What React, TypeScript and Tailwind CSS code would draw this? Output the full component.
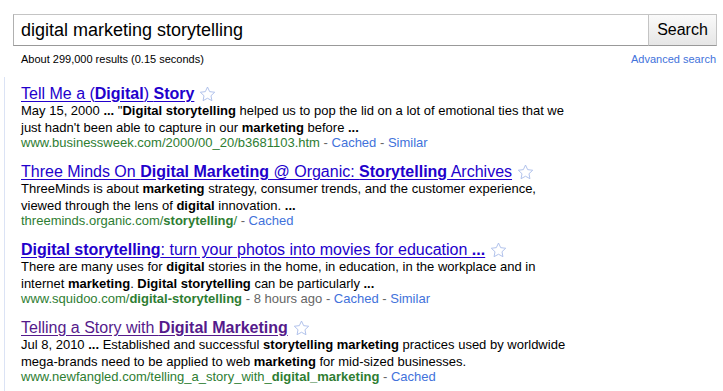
import React from 'react';

interface Result {
  title: React.ReactNode;
  visited?: boolean;
  lines: React.ReactNode[];
  url: React.ReactNode;
  extra?: string;
  similar?: boolean;
}

const results: Result[] = [
  {
    title: (
      <>
        Tell Me a (<b>Digital</b>) <b>Story</b>
      </>
    ),
    lines: [
      <>
        May 15, 2000 <b>...</b> &quot;<b>Digital storytelling</b> helped us to pop the lid on a lot of emotional ties that we
      </>,
      <>
        just hadn&apos;t been able to capture in our <b>marketing</b> before <b>...</b>
      </>,
    ],
    url: <>www.businessweek.com/2000/00_20/b3681103.htm</>,
    similar: true,
  },
  {
    title: (
      <>
        Three Minds On <b>Digital Marketing</b> @ Organic: <b>Storytelling</b> Archives
      </>
    ),
    lines: [
      <>
        ThreeMinds is about <b>marketing</b> strategy, consumer trends, and the customer experience,
      </>,
      <>
        viewed through the lens of <b>digital</b> innovation. <b>...</b>
      </>,
    ],
    url: (
      <>
        threeminds.organic.com/<b>storytelling</b>/
      </>
    ),
  },
  {
    title: (
      <>
        <b>Digital storytelling</b>: turn your photos into movies for education <b>...</b>
      </>
    ),
    lines: [
      <>
        There are many uses for <b>digital</b> stories in the home, in education, in the workplace and in
      </>,
      <>
        internet <b>marketing</b>. <b>Digital storytelling</b> can be particularly <b>...</b>
      </>,
    ],
    url: (
      <>
        www.squidoo.com/<b>digital-storytelling</b>
      </>
    ),
    extra: '8 hours ago',
    similar: true,
  },
  {
    title: (
      <>
        Telling a Story with <b>Digital Marketing</b>
      </>
    ),
    visited: true,
    lines: [
      <>
        Jul 8, 2010 <b>...</b> Established and successful <b>storytelling marketing</b> practices used by worldwide
      </>,
      <>
        mega-brands need to be applied to web <b>marketing</b> for mid-sized businesses.
      </>,
    ],
    url: (
      <>
        www.newfangled.com/telling_a_story_with_<b>digital_marketing</b>
      </>
    ),
  },
];

function Star() {
  return (
    <svg width="17" height="16" viewBox="0 0 24 23" className="ml-[5px] shrink-0">
      <path
        d="M12 1.5l3.1 6.6 7.2.9-5.3 5 1.4 7.1L12 17.6l-6.4 3.5 1.4-7.1-5.3-5 7.2-.9z"
        fill="none"
        stroke="#a9bbe9"
        strokeWidth="1.3"
        strokeLinejoin="round"
      />
    </svg>
  );
}

export default function App() {
  return (
    <div className="w-[723px] h-[391px] overflow-hidden bg-white font-['Liberation_Sans',Arial,sans-serif] text-black">
      <div className="flex pt-[14px] pl-[13px]">
        <div className="w-[636px] h-[32px] border border-[#c4c4c4] border-b-[#999] border-l-[#b0b0b0] flex items-center pl-[7px] text-[18px]">
          digital marketing storytelling
        </div>
        <button className="w-[68px] h-[32px] border border-[#c4c4c4] border-b-[#999] border-l-0 bg-gradient-to-b from-[#fafafa] to-[#e6e6e6] text-[16px] text-black">
          Search
        </button>
      </div>
      <div className="flex justify-between items-center pl-[21px] pr-[7px] h-[13px] mt-[7px] text-[11px]">
        <span>About 299,000 results (0.15 seconds)</span>
        <span className="text-[#4272db]">Advanced search</span>
      </div>
      <div className="ml-[4px] mt-[11px] border-l border-[#dbe3f5] pl-[16px] pt-[7px] h-[320px]">
        {results.map((r, i) => (
          <div key={i} className="mb-[12px]">
            <div className="flex items-center h-[19px] text-[16px] leading-[19px]">
              <span
                className={`underline underline-offset-[2px] ${
                  r.visited ? 'text-[#551a8b]' : 'text-[#2200cc]'
                }`}
              >
                {r.title}
              </span>
              <Star />
            </div>
            <div className="text-[13px] leading-[16.5px] whitespace-nowrap">
              {r.lines.map((l, j) => (
                <div key={j}>{l}</div>
              ))}
            </div>
            <div className="text-[13px] leading-[14px] whitespace-nowrap">
              <span className="text-[#2e7d32]">{r.url}</span>
              {r.extra && <span className="text-[#666]"> - {r.extra}</span>}
              <span className="text-[#666]"> - </span>
              <span className="text-[#4272db]">Cached</span>
              {r.similar && (
                <>
                  <span className="text-[#666]"> - </span>
                  <span className="text-[#4272db]">Similar</span>
                </>
              )}
            </div>
          </div>
        ))}
      </div>
    </div>
  );
}
